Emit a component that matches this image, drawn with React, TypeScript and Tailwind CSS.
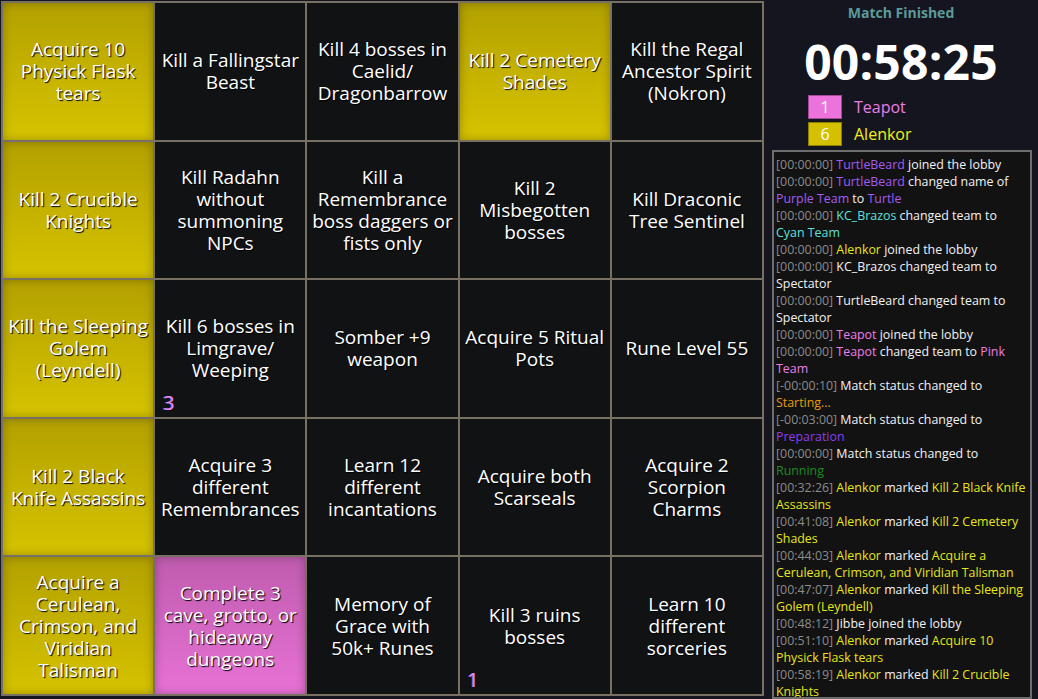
import React from 'react';

type Cell = { text: string; color?: 'yellow' | 'pink'; badge?: string; tight?: boolean };

const cells: Cell[] = [
    { text: 'Acquire 10 Physick Flask tears', color: 'yellow' },
    { text: 'Kill a Fallingstar Beast' },
    { text: 'Kill 4 bosses in Caelid/ Dragonbarrow' },
    { text: 'Kill 2 Cemetery Shades', color: 'yellow' },
    { text: 'Kill the Regal Ancestor Spirit (Nokron)' },
    { text: 'Kill 2 Crucible Knights', color: 'yellow' },
    { text: 'Kill Radahn without summoning NPCs' },
    { text: 'Kill a Remembrance boss daggers or fists only', tight: true },
    { text: 'Kill 2 Misbegotten bosses' },
    { text: 'Kill Draconic Tree Sentinel' },
    { text: 'Kill the Sleeping Golem (Leyndell)', color: 'yellow' },
    { text: 'Kill 6 bosses in Limgrave/ Weeping', badge: '3' },
    { text: 'Somber +9 weapon' },
    { text: 'Acquire 5 Ritual Pots' },
    { text: 'Rune Level 55' },
    { text: 'Kill 2 Black Knife Assassins', color: 'yellow' },
    { text: 'Acquire 3 different Remembrances' },
    { text: 'Learn 12 different incantations' },
    { text: 'Acquire both Scarseals' },
    { text: 'Acquire 2 Scorpion Charms' },
    { text: 'Acquire a Cerulean, Crimson, and Viridian Talisman', color: 'yellow' },
    { text: 'Complete 3 cave, grotto, or hideaway dungeons', color: 'pink' },
    { text: 'Memory of Grace with 50k+ Runes' },
    { text: 'Kill 3 ruins bosses', badge: '1' },
    { text: 'Learn 10 different sorceries' },
];

// log segments: [text, colour class]
type Seg = [string, string];
const T = 'text-[#8c8c8c]';
const W = 'text-[#f2f2f2]';
const PU = 'text-[#a35cf5]';
const CY = 'text-[#5ee0dc]';
const YE = 'text-[#e6e619]';
const PK = 'text-[#ea7ee6]';

const log: Seg[][] = [
    [['[00:00:00] ', T], ['TurtleBeard', PU], [' joined the lobby', W]],
    [['[00:00:00] ', T], ['TurtleBeard', PU], [' changed name of ', W], ['Purple Team', PU], [' to ', W], ['Turtle', PU]],
    [['[00:00:00] ', T], ['KC_Brazos', CY], [' changed team to ', W], ['Cyan Team', CY]],
    [['[00:00:00] ', T], ['Alenkor', YE], [' joined the lobby', W]],
    [['[00:00:00] ', T], ['KC_Brazos changed team to Spectator', W]],
    [['[00:00:00] ', T], ['TurtleBeard changed team to Spectator', W]],
    [['[00:00:00] ', T], ['Teapot', PK], [' joined the lobby', W]],
    [['[00:00:00] ', T], ['Teapot', PK], [' changed team to ', W], ['Pink Team', PK]],
    [['[-00:00:10] ', T], ['Match status changed to ', W], ['Starting...', 'text-[#e89c0c]']],
    [['[-00:03:00] ', T], ['Match status changed to ', W], ['Preparation', 'text-[#8a3ef0]']],
    [['[00:00:00] ', T], ['Match status changed to ', W], ['Running', 'text-[#1f8c1f]']],
    [['[00:32:26] ', T], ['Alenkor', YE], [' marked ', W], ['Kill 2 Black Knife Assassins', YE]],
    [['[00:41:08] ', T], ['Alenkor', YE], [' marked ', W], ['Kill 2 Cemetery Shades', YE]],
    [['[00:44:03] ', T], ['Alenkor', YE], [' marked ', W], ['Acquire a Cerulean, Crimson, and Viridian Talisman', YE]],
    [['[00:47:07] ', T], ['Alenkor', YE], [' marked ', W], ['Kill the Sleeping Golem (Leyndell)', YE]],
    [['[00:48:12] ', T], ['Jibbe joined the lobby', W]],
    [['[00:51:10] ', T], ['Alenkor', YE], [' marked ', W], ['Acquire 10 Physick Flask tears', YE]],
    [['[00:58:19] ', T], ['Alenkor', YE], [' marked ', W], ['Kill 2 Crucible Knights', YE]],
];

const cellBg = (c?: Cell['color']) => {
    if (c === 'yellow') return 'bg-gradient-to-b from-[#b3a100] to-[#d6c300] shadow-[inset_0_0_10px_rgba(0,0,0,0.28)]';
    if (c === 'pink') return 'bg-gradient-to-b from-[#bf5cae] to-[#e872d6] shadow-[inset_0_0_10px_rgba(0,0,0,0.28)]';
    return 'bg-[#111213]';
};

export default function App() {
    return (
        <div className="w-[1038px] h-[699px] overflow-hidden bg-[#15151f] flex font-['Open_Sans',sans-serif]">
            {/* Board */}
            <div className="pl-px pt-px">
                <div className="w-[763px] h-[695px] bg-[#787063] p-[2px] grid grid-cols-5 grid-rows-5 gap-[2px]">
                    {cells.map((c, i) => (
                        <div
                            key={i}
                            className={`relative flex items-center justify-center text-center text-[19px] leading-[22px] text-white [text-shadow:1px_1px_1px_#000] ${c.tight ? 'px-0' : 'px-[5px]'} ${cellBg(c.color)}`}
                        >
                            <span>{c.text}</span>
                            {c.badge && (
                                <span className="absolute left-[8px] bottom-[3px] text-[20px] leading-[22px] text-[#ec88ea] [text-shadow:-1px_0_0_#7a72ff]">
                                    {c.badge}
                                </span>
                            )}
                        </div>
                    ))}
                </div>
            </div>

            {/* Side panel */}
            <div className="flex-1 flex flex-col">
                <div className="text-center text-[14px] font-bold text-[#5d9a9a] mt-[4px] leading-[18px]">Match Finished</div>
                <div className="text-center text-[48px] font-bold text-white leading-[56px] mt-[12px] tracking-[0.2px]">00:58:25</div>
                <div className="flex flex-col gap-[3px] pl-[44px] mt-[5px]">
                    <div className="flex items-center gap-[12px]">
                        <div className="w-[34px] h-[24px] bg-[#ec72dc] border border-[#a04a98] flex items-center justify-center text-white text-[16px]">1</div>
                        <span className="text-[16px] text-[#ea7ee6]">Teapot</span>
                    </div>
                    <div className="flex items-center gap-[12px]">
                        <div className="w-[34px] h-[24px] bg-[#d4c000] border border-[#8c7e00] flex items-center justify-center text-white text-[16px]">6</div>
                        <span className="text-[16px] text-[#f0f019]">Alenkor</span>
                    </div>
                </div>
                <div className="ml-[8px] mr-[6px] mt-[4px] flex-1 bg-[#121212] border-2 border-[#6e6e6e] pl-[2px] pr-[4px] pt-[4px] text-[12.4px] leading-[17px] overflow-hidden">
                    {log.map((line, i) => (
                        <div key={i}>
                            {line.map(([t, cls], j) => (
                                <span key={j} className={cls}>{t}</span>
                            ))}
                        </div>
                    ))}
                </div>
            </div>
        </div>
    );
}
